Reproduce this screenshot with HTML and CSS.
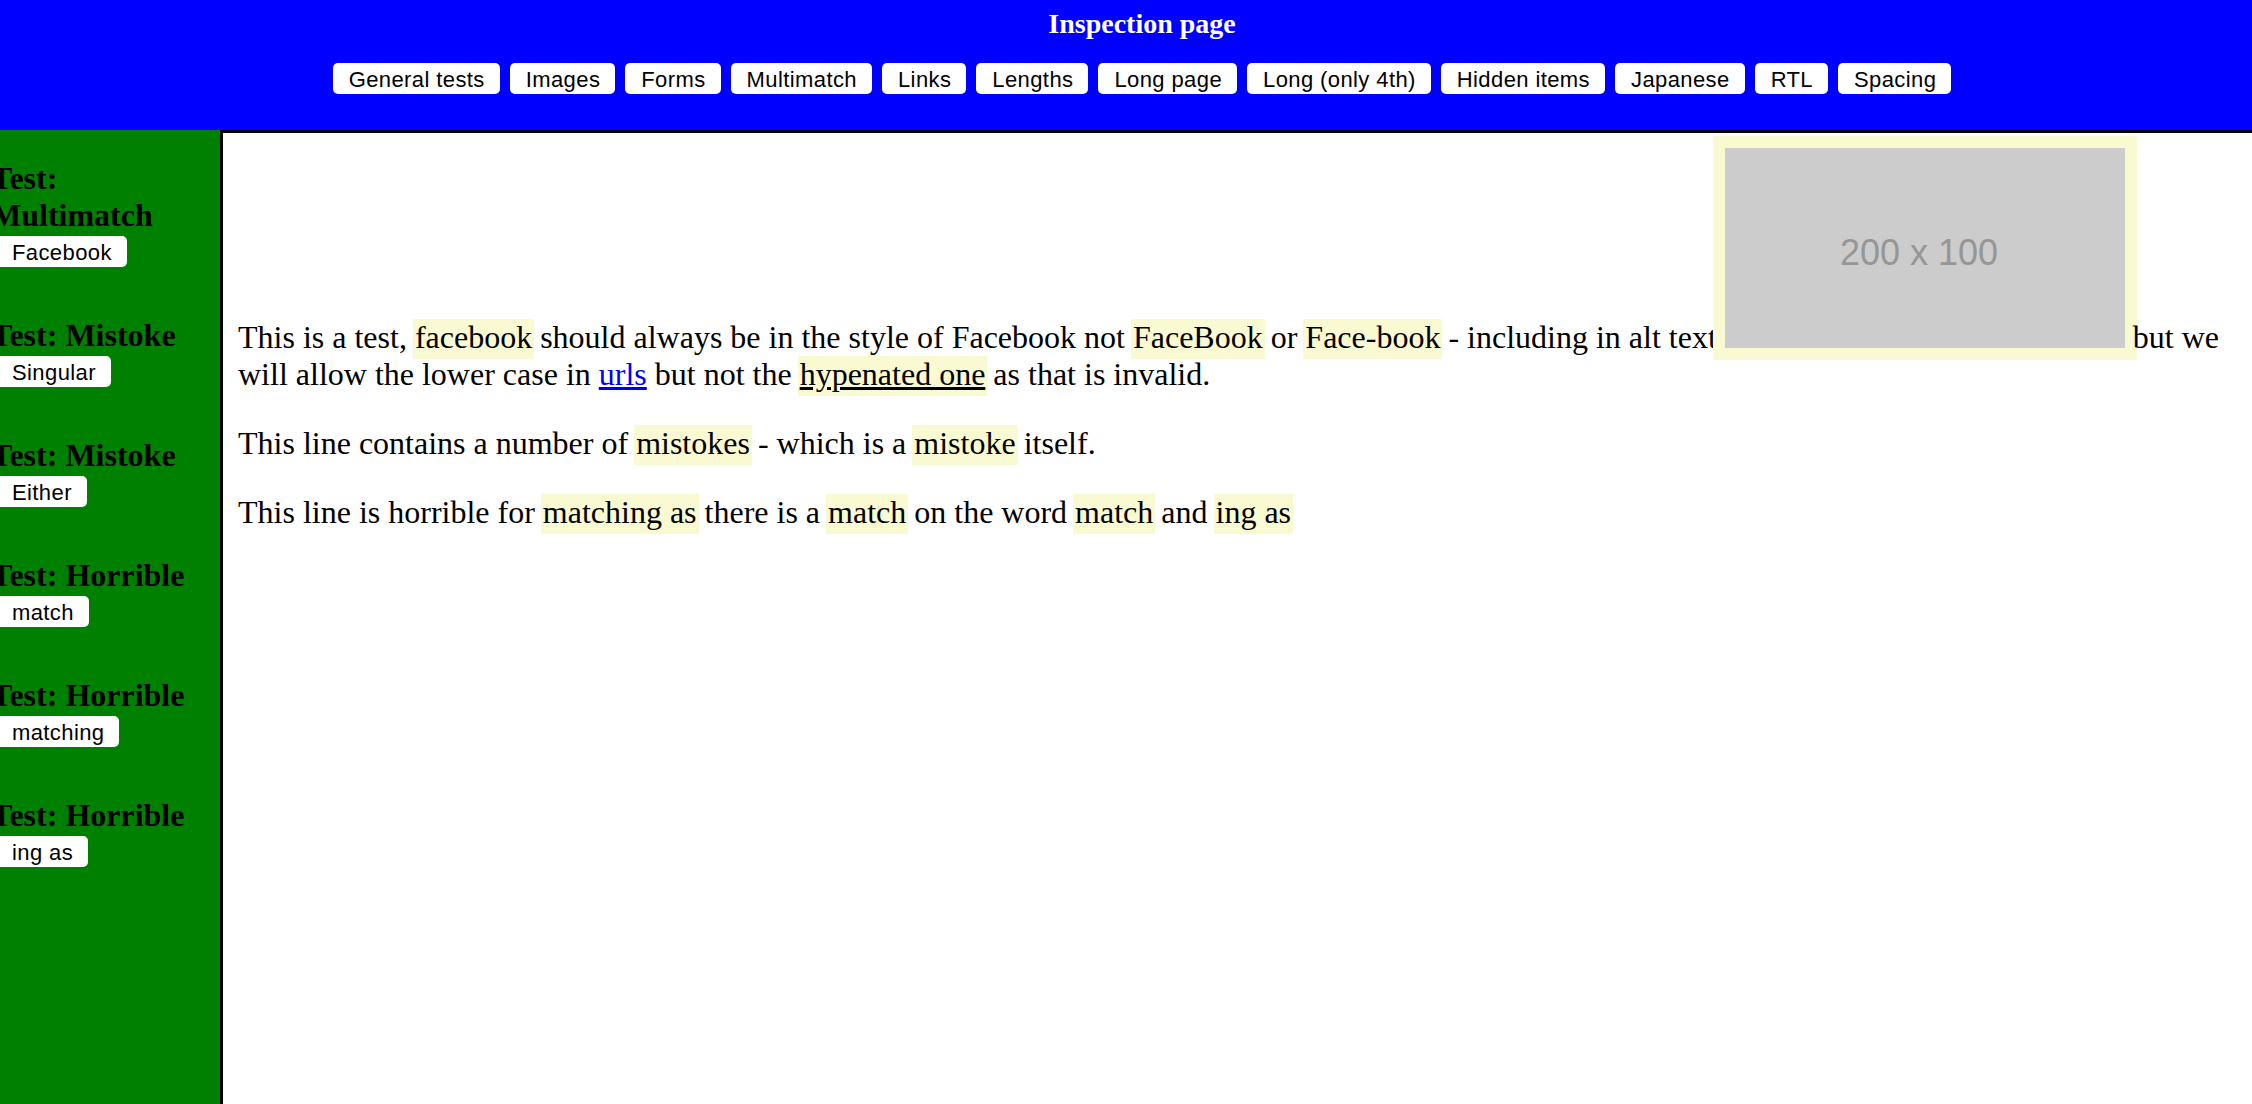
FILE: index.html
```html
<!DOCTYPE html>
<html lang="en">
<head>
<meta charset="utf-8">
<title>Inspection page</title>
<link rel="stylesheet" href="styles.css">
</head>
<body>
<header class="topbar">
  <h1 class="title">Inspection page</h1>
  <nav class="tabs">
    <button class="btn">General tests</button>
    <button class="btn">Images</button>
    <button class="btn">Forms</button>
    <button class="btn">Multimatch</button>
    <button class="btn">Links</button>
    <button class="btn">Lengths</button>
    <button class="btn">Long page</button>
    <button class="btn">Long (only 4th)</button>
    <button class="btn">Hidden items</button>
    <button class="btn">Japanese</button>
    <button class="btn">RTL</button>
    <button class="btn">Spacing</button>
  </nav>
</header>
<div class="layout">
  <aside class="sidebar">
    <div class="test"><h2 class="test-title">Test: Multimatch</h2><button class="btn side-btn">Facebook</button></div>
    <div class="test"><h2 class="test-title">Test: Mistoke</h2><button class="btn side-btn">Singular</button></div>
    <div class="test"><h2 class="test-title">Test: Mistoke</h2><button class="btn side-btn">Either</button></div>
    <div class="test"><h2 class="test-title">Test: Horrible</h2><button class="btn side-btn">match</button></div>
    <div class="test"><h2 class="test-title">Test: Horrible</h2><button class="btn side-btn">matching</button></div>
    <div class="test"><h2 class="test-title">Test: Horrible</h2><button class="btn side-btn">ing as</button></div>
  </aside>
  <main class="content">
    <p>This is a test, <span class="hl">facebook</span> should always be in the style of Facebook not <span class="hl">FaceBook</span> or <span class="hl">Face-book</span> - including in alt text <svg class="placeholder" width="400" height="200" viewBox="0 0 400 200" role="img" aria-label="Facebook placeholder image"><rect width="400" height="200" fill="#cccccc"/><text x="194" y="107" text-anchor="middle" dominant-baseline="middle" class="ph-text">200 x 100</text></svg> but we will allow the lower case in <a href="#" class="link">urls</a> but not the <span class="hl hl-under">hypenated one</span> as that is invalid.</p>
    <p>This line contains a number of <span class="hl">mistokes</span> - which is a <span class="hl">mistoke</span> itself.</p>
    <p>This line is horrible for <span class="hl">matching as</span> there is a <span class="hl">match</span> on the word <span class="hl">match</span> and <span class="hl">ing as</span></p>
  </main>
</div>
</body>
</html>
```
FILE: styles.css
```css
html, body {
  margin: 0;
  padding: 0;
}

body {
  height: 100vh;
  display: flex;
  flex-direction: column;
  overflow: hidden;
  font-family: "Liberation Serif", "Times New Roman", serif;
  background: #ffffff;
}

.topbar {
  flex: none;
  height: 130px;
  box-sizing: border-box;
  background: #0000ff;
  padding: 8px 0 0 32px;
  text-align: center;
}

.title {
  margin: 0;
  font-family: "Liberation Serif", "Times New Roman", serif;
  font-weight: bold;
  font-size: 28px;
  line-height: normal;
  color: #ffffff;
}

.tabs {
  display: flex;
  justify-content: center;
  gap: 10px;
  margin-top: 23px;
}

.btn {
  font-family: "Liberation Sans", Arial, sans-serif;
  font-size: 22px;
  letter-spacing: 0.4px;
  line-height: 25px;
  padding: 4px 15px 2px 16px;
  background: #ffffff;
  color: #000000;
  border: none;
  border-radius: 5px;
  margin: 0;
}

.layout {
  flex: 1;
  display: flex;
  min-height: 0;
}

.sidebar {
  flex: none;
  width: 220px;
  background: #008000;
  padding-top: 30px;
  overflow: hidden;
  box-sizing: border-box;
}

.test {
  display: flex;
  flex-direction: column;
  align-items: flex-start;
  margin-bottom: 50px;
}

.test-title {
  margin: 0 0 0 -9px;
  font-size: 32px;
  line-height: 37px;
  font-weight: bold;
  color: #000000;
}

.side-btn {
  margin: 2px 0 0 -4px;
}

.content {
  flex: 1;
  min-width: 0;
  border-left: 3px solid #000000;
  border-top: 3px solid #000000;
  padding: 15px 15px;
  font-size: 32px;
  line-height: normal;
  color: #000000;
}

.content p {
  margin: 32px 0;
}

.content p:first-child {
  margin-top: 0;
}

.hl {
  background: #fafad2;
  box-shadow: 0 2px 0 2px #fafad2;
}

.hl-under {
  text-decoration: underline;
}

.link {
  color: #0000ee;
}

.placeholder {
  box-shadow: 0 0 0 12px #fafad2;
}

.ph-text {
  font-family: "Liberation Sans", Arial, sans-serif;
  font-size: 36px;
  fill: #969696;
}
```
